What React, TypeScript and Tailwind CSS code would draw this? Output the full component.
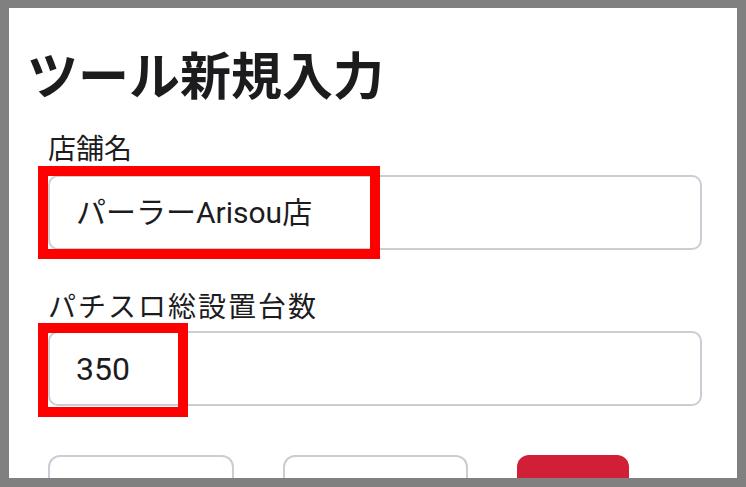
export default function App() {
  const font = { fontFamily: 'Roboto, "Noto Sans CJK JP", sans-serif' };

  return (
    <div className="h-[487px] w-[746px] overflow-hidden bg-[#808080] px-[9px] pt-[8px]" style={font}>
      <div className="relative h-[470px] overflow-hidden bg-white">
        {/* Title */}
        <h1 className="pl-[18px] pt-[40px] text-[51px] font-bold leading-[60px] text-[#1c1c1e]">ツール新規入力</h1>

        <div className="pl-[39px] pr-[35px] pt-[24px]">
          {/* Store name */}
          <label className="block text-[28px] leading-[36px] text-[#1c1c1e]">店舗名</label>
          <div className="mt-[7px] flex h-[75px] items-center rounded-[10px] border-2 border-[#c9ced4] px-[26px] text-[30px] text-[#1c1c1e]">
            パーラーArisou店
          </div>

          {/* Total slot machines */}
          <label className="mt-[40px] block text-[28px] leading-[36px] tracking-[2px] text-[#1c1c1e]">パチスロ総設置台数</label>
          <div className="mt-[5px] flex h-[75px] items-center rounded-[10px] border-2 border-[#c9ced4] px-[26px] text-[32px] text-[#1c1c1e]">
            350
          </div>

          {/* Buttons */}
          <div className="mt-[49px] flex gap-[49px]">
            <div className="h-[64px] w-[186px] rounded-[12px] border-2 border-[#c9ced4] bg-white" />
            <div className="h-[64px] w-[185px] rounded-[12px] border-2 border-[#c9ced4] bg-white" />
            <div className="h-[64px] w-[112px] rounded-[12px] bg-[#d11f38]" />
          </div>
        </div>

        {/* Red annotation boxes */}
        <div className="absolute left-[29px] top-[158px] h-[93px] w-[342px] border-[10px] border-[#ff0000]" />
        <div className="absolute left-[29px] top-[315px] h-[94px] w-[150px] border-[10px] border-[#ff0000]" />
      </div>
    </div>
  );
}
